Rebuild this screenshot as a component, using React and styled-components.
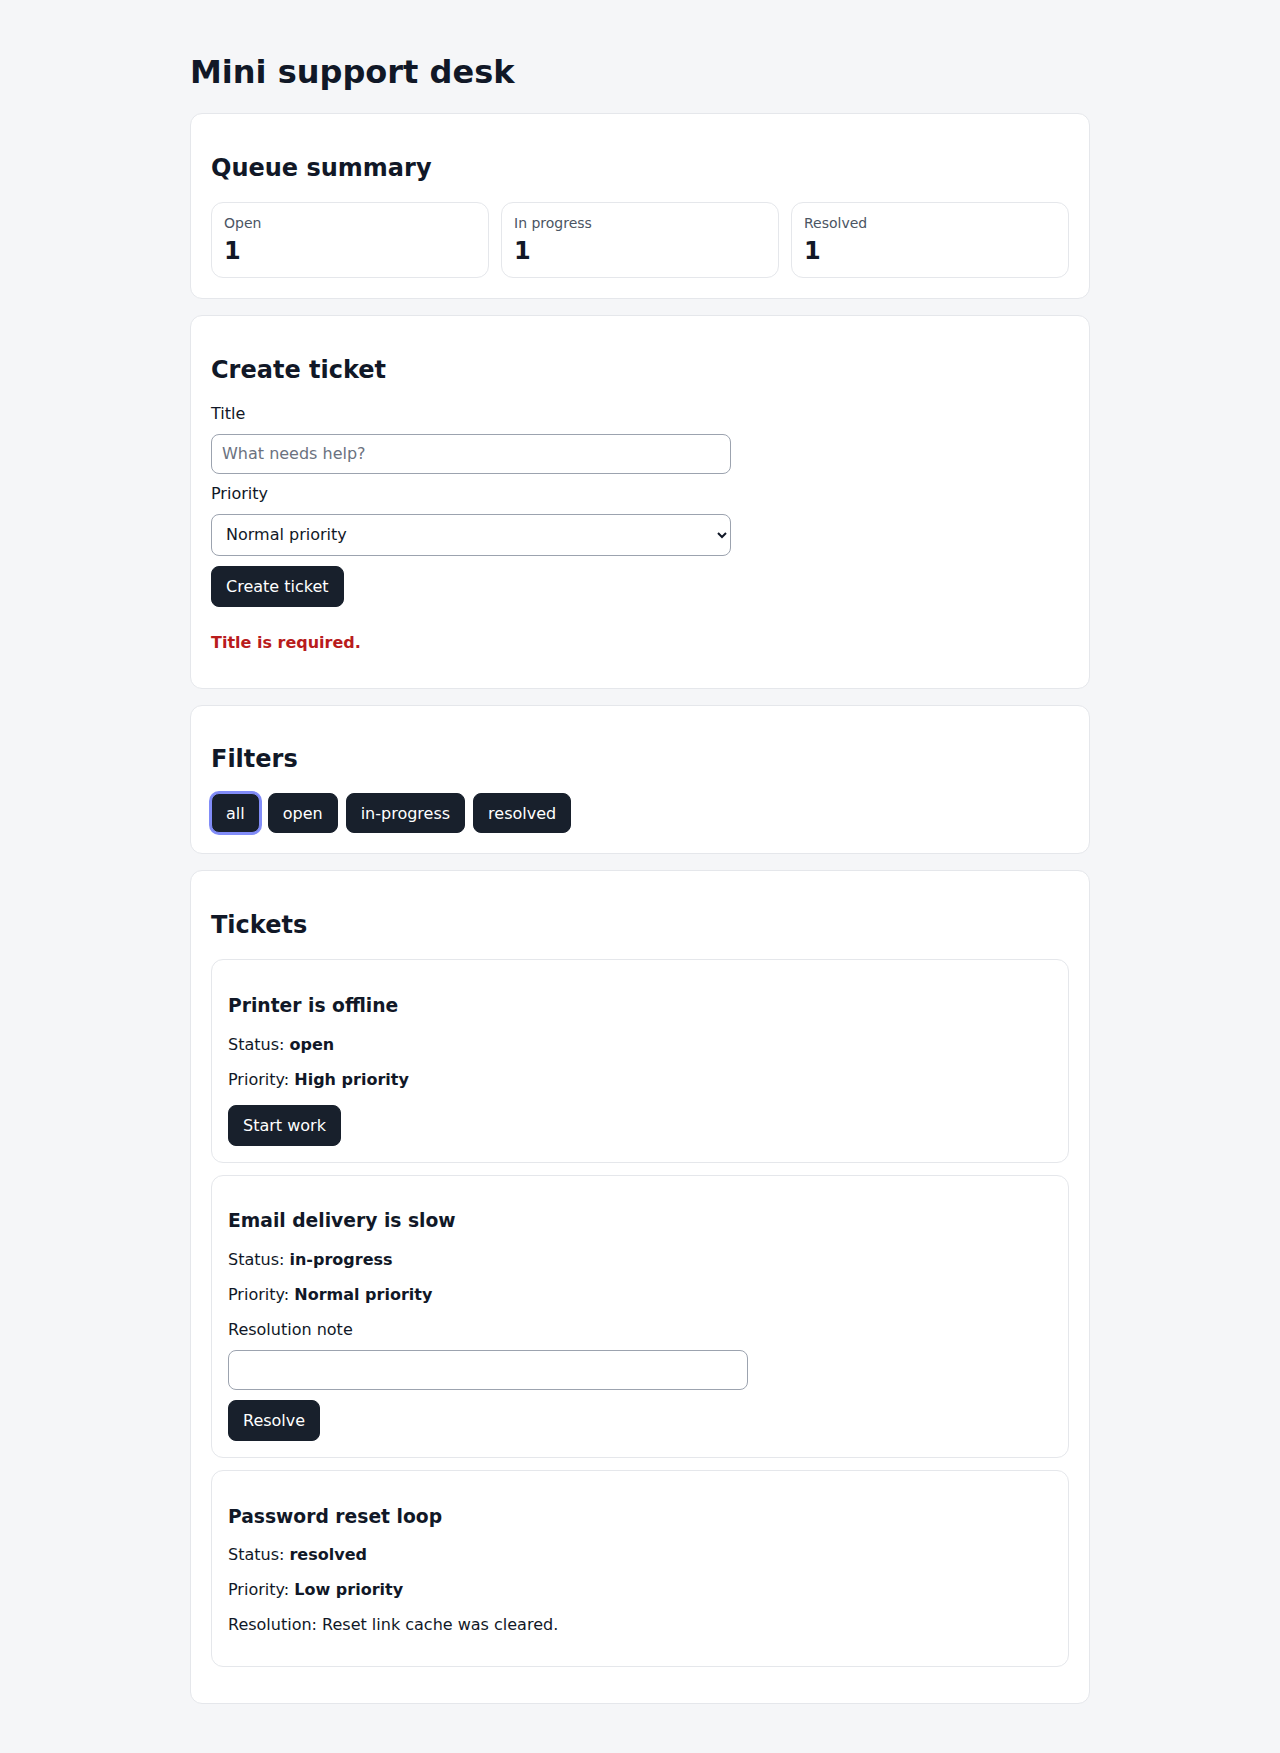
import React from "react";
import styled, { createGlobalStyle } from "styled-components";

const GlobalStyle = createGlobalStyle`
  html, body {
    margin: 0;
    padding: 0;
    background: #f5f6f8;
    color: #111827;
    font-family: "DejaVu Sans", Verdana, sans-serif;
    font-size: 16px;
  }
  * { box-sizing: border-box; }
`;

const Page = styled.main`
  max-width: 932px;
  margin: 0 auto;
  padding: 32px 16px 48px;
`;

const Title = styled.h1`
  font-size: 32px;
  font-weight: 700;
  margin: 21.44px 0;
  color: #111827;
`;

const Card = styled.section`
  background: #ffffff;
  border: 1px solid #e5e7eb;
  border-radius: 12px;
  padding: 20px;
  & + & {
    margin-top: 16px;
  }
`;

const CardTitle = styled.h2`
  font-size: 24px;
  font-weight: 700;
  margin: 19.92px 0;
  color: #111827;
`;

const StatGrid = styled.div`
  display: grid;
  grid-template-columns: repeat(3, 1fr);
  gap: 12px;
`;

const Stat = styled.div`
  border: 1px solid #e5e7eb;
  border-radius: 12px;
  padding: 12px;
  display: flex;
  flex-direction: column;
  gap: 6px;
`;

const StatLabel = styled.span`
  font-size: 14px;
  color: #4b5563;
`;

const StatValue = styled.strong`
  font-size: 24px;
  font-weight: 700;
  color: #111827;
`;

const Form = styled.form`
  display: flex;
  flex-direction: column;
  gap: 10px;
`;

const Label = styled.label`
  display: block;
  font-size: 16px;
  line-height: 1.25;
  color: #111827;
`;

const TextInput = styled.input`
  width: 100%;
  max-width: 520px;
  height: 40px;
  font-family: inherit;
  font-size: 16px;
  padding: 0 10px;
  border: 1px solid #9ca3af;
  border-radius: 8px;
  background: #fff;
  color: #111827;
  &::placeholder {
    color: #6b7280;
  }
`;

const Select = styled.select`
  width: 100%;
  max-width: 520px;
  height: 42px;
  font-family: inherit;
  font-size: 16px;
  padding: 0 10px;
  border: 1px solid #9ca3af;
  border-radius: 8px;
  background: #fff;
  color: #111827;
`;

const Button = styled.button`
  align-self: flex-start;
  font-family: inherit;
  font-size: 16px;
  padding: 10px 14px;
  background: #18202c;
  color: #ffffff;
  border: 1px solid #18202c;
  border-radius: 8px;
  cursor: pointer;
  line-height: normal;
`;

const FilterButton = styled(Button)`
  height: 40px;
  padding: 0 14px;
  border-color: ${(p) => (p.$active ? "#818cf8" : "#18202c")};
  box-shadow: ${(p) => (p.$active ? "0 0 0 2px #818cf8" : "none")};
`;

const ErrorText = styled.p`
  margin: 16px 0;
  color: #b91c1c;
  font-weight: 700;
`;

const FilterRow = styled.div`
  display: flex;
  gap: 8px;
`;

const TicketList = styled.ul`
  list-style: none;
  padding: 0;
  margin: 16px 0;
  display: flex;
  flex-direction: column;
  gap: 12px;
`;

const Ticket = styled.li`
  border: 1px solid #e5e7eb;
  border-radius: 12px;
  padding: 16px;
`;

const TicketTitle = styled.h3`
  font-size: 18.72px;
  font-weight: 700;
  margin: 18.72px 0;
`;

const Line = styled.p`
  margin: 16px 0;
`;

const NoteForm = styled.div`
  display: flex;
  flex-direction: column;
  gap: 10px;
  margin-top: 16px;
`;

const tickets = [
  { title: "Printer is offline", status: "open", priority: "High priority" },
  { title: "Email delivery is slow", status: "in-progress", priority: "Normal priority" },
  {
    title: "Password reset loop",
    status: "resolved",
    priority: "Low priority",
    resolution: "Reset link cache was cleared.",
  },
];

export default function App() {
  return (
    <>
      <GlobalStyle />
      <Page>
        <Title>Mini support desk</Title>

        <Card>
          <CardTitle>Queue summary</CardTitle>
          <StatGrid>
            <Stat>
              <StatLabel>Open</StatLabel>
              <StatValue>1</StatValue>
            </Stat>
            <Stat>
              <StatLabel>In progress</StatLabel>
              <StatValue>1</StatValue>
            </Stat>
            <Stat>
              <StatLabel>Resolved</StatLabel>
              <StatValue>1</StatValue>
            </Stat>
          </StatGrid>
        </Card>

        <Card>
          <CardTitle>Create ticket</CardTitle>
          <Form onSubmit={(e) => e.preventDefault()}>
            <Label htmlFor="title">Title</Label>
            <TextInput id="title" placeholder="What needs help?" />
            <Label htmlFor="priority">Priority</Label>
            <Select id="priority" defaultValue="normal">
              <option value="low">Low priority</option>
              <option value="normal">Normal priority</option>
              <option value="high">High priority</option>
            </Select>
            <Button type="submit">Create ticket</Button>
            <ErrorText>Title is required.</ErrorText>
          </Form>
        </Card>

        <Card>
          <CardTitle>Filters</CardTitle>
          <FilterRow>
            {["all", "open", "in-progress", "resolved"].map((f) => (
              <FilterButton key={f} $active={f === "all"}>
                {f}
              </FilterButton>
            ))}
          </FilterRow>
        </Card>

        <Card>
          <CardTitle>Tickets</CardTitle>
          <TicketList>
            {tickets.map((t) => (
              <Ticket key={t.title}>
                <TicketTitle>{t.title}</TicketTitle>
                <Line>
                  Status: <strong>{t.status}</strong>
                </Line>
                <Line>
                  Priority: <strong>{t.priority}</strong>
                </Line>
                {t.status === "open" && <Button>Start work</Button>}
                {t.status === "in-progress" && (
                  <NoteForm>
                    <Label>Resolution note</Label>
                    <TextInput />
                    <Button>Resolve</Button>
                  </NoteForm>
                )}
                {t.resolution && <Line>Resolution: {t.resolution}</Line>}
              </Ticket>
            ))}
          </TicketList>
        </Card>
      </Page>
    </>
  );
}
